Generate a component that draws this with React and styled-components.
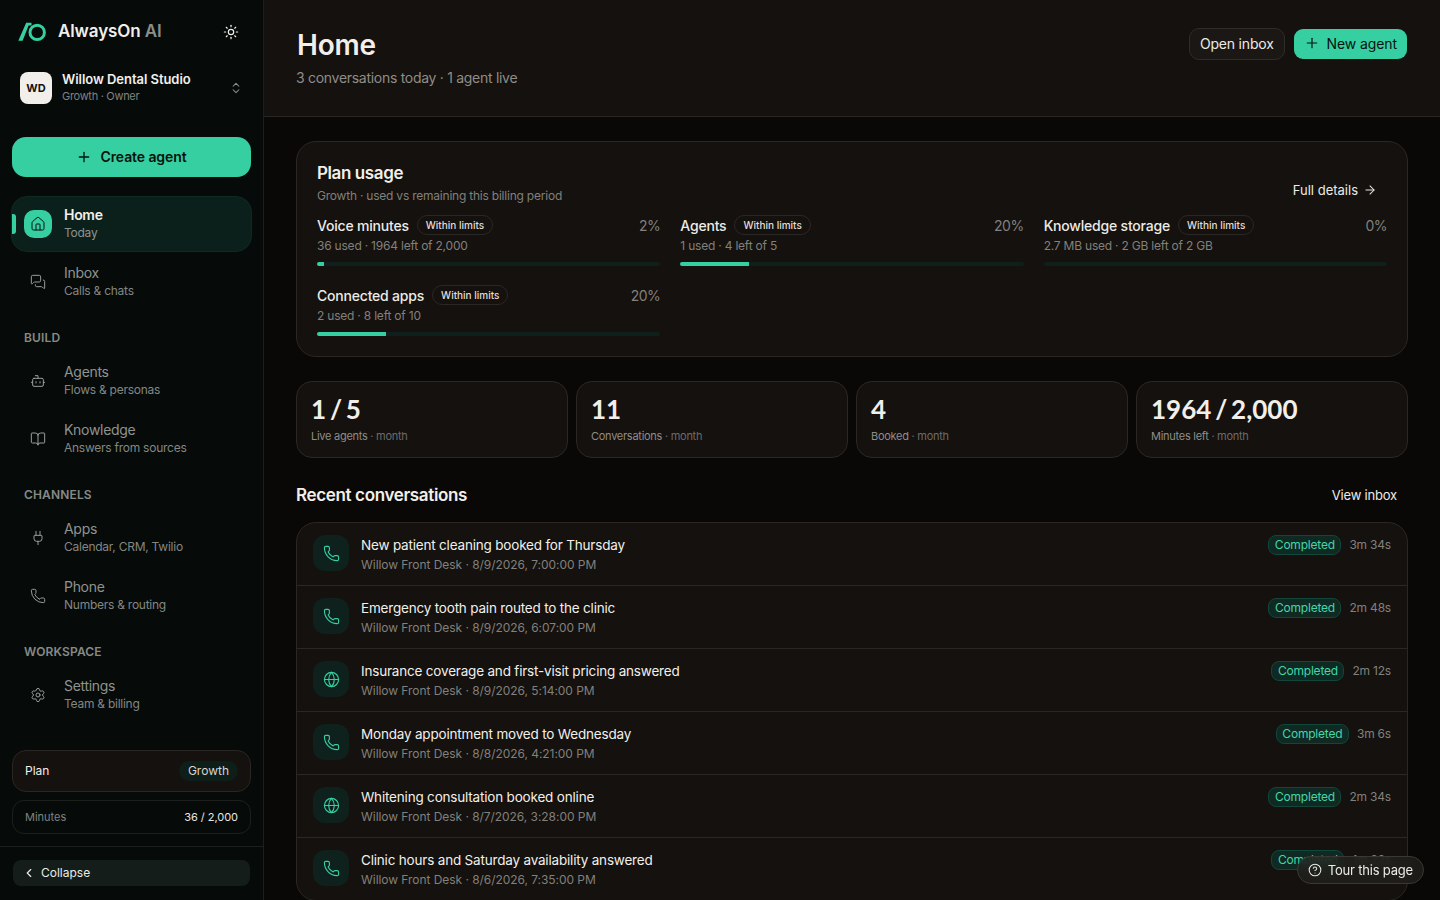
import styled, { createGlobalStyle } from "styled-components";
import {
  ArrowRight,
  BookOpen,
  Bot,
  ChevronLeft,
  ChevronsUpDown,
  CircleHelp,
  Globe,
  House,
  MessagesSquare,
  Phone,
  Plug,
  Plus,
  Settings,
  Sun,
} from "lucide-react";

const GlobalStyle = createGlobalStyle`
  * { box-sizing: border-box; }
  html, body { margin: 0; height: 100%; overflow: hidden; background: #0a0807; }
  body {
    font-family: Inter, "Liberation Sans", sans-serif;
    color: #f2efea;
    -webkit-font-smoothing: antialiased;
  }
  button { font-family: inherit; }
`;

const Shell = styled.div`
  display: flex;
  height: 900px;
  overflow: hidden;
`;

const Sidebar = styled.aside`
  width: 264px;
  flex: none;
  height: 900px;
  display: flex;
  flex-direction: column;
  background: #060a09;
  border-right: 1px solid #1c1f1d;
`;

const Brand = styled.div`
  height: 64px;
  padding: 0 24px 0 18px;
  display: flex;
  align-items: center;
  justify-content: space-between;
  color: #f2efea;
`;

const BrandName = styled.div`
  display: flex;
  align-items: center;
  gap: 12px;
  font-size: 17px;
  line-height: 20px;
  font-weight: 600;
  letter-spacing: -0.1px;

  & > span {
    padding-bottom: 2px;
  }

  span span {
    color: #8b8f8b;
  }
`;

const Workspace = styled.div`
  height: 48px;
  margin-bottom: 25px;
  padding: 0 20px;
  display: flex;
  align-items: center;
  gap: 10px;
`;

const Avatar = styled.div`
  width: 32px;
  height: 32px;
  border-radius: 8px;
  background: #f2efea;
  color: #14110e;
  font-size: 11px;
  font-weight: 700;
  display: flex;
  align-items: center;
  justify-content: center;
`;

const WorkspaceText = styled.div`
  flex: 1;
  padding-bottom: 2px;
`;

const WorkspaceName = styled.div`
  font-size: 13px;
  line-height: 16px;
  font-weight: 600;
  letter-spacing: -0.05px;
`;

const WorkspaceMeta = styled.div`
  margin-top: 1px;
  font-size: 11px;
  line-height: 16px;
  letter-spacing: -0.3px;
  color: #7f8380;
`;

const CreateButton = styled.button`
  margin: 0 12px 19px;
  height: 40px;
  padding: 0 0 1px;
  border: none;
  border-radius: 14px;
  background: #36cfa2;
  color: #06140f;
  font-size: 14px;
  font-weight: 600;
  letter-spacing: -0.1px;
  display: flex;
  align-items: center;
  justify-content: center;
  gap: 8px;
`;

const Nav = styled.nav`
  padding: 0 12px;
  display: flex;
  flex-direction: column;
`;

const NavItem = styled.div`
  position: relative;
  height: 56px;
  margin-bottom: 2px;
  border-radius: 16px;
  display: flex;
  align-items: center;
  gap: 12px;
  background: ${(p) => (p.$active ? "#0b201b" : "transparent")};
  border: 1px solid ${(p) => (p.$active ? "#0f2a23" : "transparent")};
  margin-left: ${(p) => (p.$active ? "-1px" : "0")};
  margin-right: ${(p) => (p.$active ? "-1px" : "0")};
  padding: 0 11px 0 ${(p) => (p.$active ? "12px" : "11px")};
`;

const ActiveMark = styled.span`
  position: absolute;
  left: 0;
  top: 17px;
  width: 4px;
  height: 20px;
  border-radius: 0 3px 3px 0;
  background: #36cfa2;
`;

const NavIcon = styled.span`
  width: 28px;
  height: 28px;
  flex: none;
  border-radius: 10px;
  display: flex;
  align-items: center;
  justify-content: center;
  background: ${(p) => (p.$active ? "#36cfa2" : "transparent")};
  color: ${(p) => (p.$active ? "#06140f" : "#9a9e9a")};
`;

const NavLabel = styled.div`
  font-size: 14px;
  line-height: 18px;
  letter-spacing: -0.3px;
  font-weight: ${(p) => (p.$active ? 600 : 400)};
  color: ${(p) => (p.$active ? "#f2efea" : "#8f938f")};
`;

const NavSub = styled.div`
  font-size: 12px;
  line-height: 18px;
  letter-spacing: -0.25px;
  color: ${(p) => (p.$active ? "#8f938f" : "#838783")};
`;

const NavGroup = styled.div`
  font-size: 12px;
  line-height: 16px;
  font-weight: 600;
  letter-spacing: 0.15px;
  color: #868a86;
  padding: 0 12px;
  margin: 18px 0 7px;
`;

const SideFoot = styled.div`
  margin-top: auto;
  display: flex;
  flex-direction: column;
`;

const PlanRow = styled.div`
  margin: 0 12px 8px;
  height: 42px;
  padding: 0 12px 1px;
  border: 1px solid #2a2623;
  border-radius: 14px;
  background: #14110e;
  display: flex;
  align-items: center;
  justify-content: space-between;
  font-size: 12px;
`;

const PlanTag = styled.span`
  padding: 3px 9px;
  line-height: 14px;
  border-radius: 10px;
  background: #0e1e19;
  color: #d8d6d1;
`;

const MinutesRow = styled.div`
  margin: 0 12px 12px;
  height: 34px;
  padding: 0 12px;
  border: 1px solid #1e201e;
  border-radius: 12px;
  display: flex;
  align-items: center;
  justify-content: space-between;
  font-size: 11px;
  color: #7f8380;

  b {
    font-weight: 400;
    letter-spacing: -0.05px;
    color: #e8e6e1;
  }
`;

const CollapseWrap = styled.div`
  border-top: 1px solid #1c1f1d;
  padding: 13px 13px 14px;
`;

const CollapseButton = styled.button`
  width: 100%;
  height: 26px;
  padding: 0 8px 1px;
  border: none;
  border-radius: 8px;
  background: #141d1a;
  color: #ecebe6;
  font-size: 12px;
  display: flex;
  align-items: center;
  gap: 5px;

  svg {
    margin-left: 1px;
  }
`;

const Main = styled.main`
  flex: 1;
  min-width: 0;
  height: 900px;
  overflow: hidden;
  background: #0a0807;
`;

const PageHeader = styled.header`
  height: 117px;
  padding: 28px 33px 0 32px;
  background: #14110e;
  border-bottom: 1px solid #2a2724;
  display: flex;
  justify-content: space-between;
  align-items: flex-start;
`;

const PageTitle = styled.h1`
  margin: 0 0 0 1px;
  font-size: 28px;
  line-height: 34px;
  font-weight: 600;
  letter-spacing: -0.2px;
`;

const PageSub = styled.p`
  margin: 6px 0 0;
  font-size: 14px;
  line-height: 20px;
  letter-spacing: -0.29px;
  color: #8f8d89;
`;

const HeaderActions = styled.div`
  display: flex;
  align-items: center;
  gap: 9px;
`;

const GhostButton = styled.button`
  height: 32px;
  padding: 0 10px 2px;
  border: 1px solid #2f2c29;
  border-radius: 10px;
  background: #1a1714;
  color: #ecebe6;
  font-size: 14px;
  letter-spacing: -0.2px;
`;

const PrimaryButton = styled.button`
  height: 30px;
  padding: 0 10px 2px;
  border: none;
  border-radius: 9px;
  background: #36cfa2;
  color: #06140f;
  font-size: 14px;
  letter-spacing: -0.1px;
  display: flex;
  align-items: center;
  gap: 7px;
`;

const Content = styled.div`
  padding: 24px 32px 0;
`;

const UsageCard = styled.section`
  position: relative;
  height: 216px;
  padding: 19px 20px;
  border: 1px solid #2a2724;
  border-radius: 20px;
  background: #14110e;
`;

const CardTitle = styled.h2`
  margin: 0;
  font-size: 17px;
  line-height: 24px;
  font-weight: 600;
  letter-spacing: -0.4px;
`;

const CardSub = styled.p`
  margin: 2px 0 0;
  font-size: 12px;
  line-height: 18px;
  letter-spacing: -0.22px;
  color: #82807c;
`;

const DetailsLink = styled.a`
  position: absolute;
  right: 30px;
  top: 39px;
  display: flex;
  align-items: center;
  gap: 5px;
  font-size: 13px;
  line-height: 18px;
  color: #ecebe6;
`;

const MeterGrid = styled.div`
  margin-top: 10px;
  display: grid;
  grid-template-columns: repeat(3, 1fr);
  column-gap: 20px;
  row-gap: 19px;
`;

const MeterHead = styled.div`
  display: flex;
  align-items: center;
  gap: 8px;
  height: 20px;
`;

const MeterName = styled.span`
  font-size: 14px;
  letter-spacing: -0.2px;
  color: #ecebe6;
  font-weight: 500;
`;

const LimitTag = styled.span`
  height: 20px;
  padding: 1px 8px 0;
  border: 1px solid #2a2724;
  border-radius: 10px;
  font-size: 10px;
  font-weight: 500;
  line-height: 17px;
  color: #e0ded9;
`;

const MeterPct = styled.span`
  margin-left: auto;
  font-size: 14px;
  letter-spacing: -0.5px;
  color: #82807c;
`;

const MeterDetail = styled.div`
  margin-top: 2px;
  font-size: 12px;
  line-height: 18px;
  letter-spacing: -0.21px;
  color: #82807c;
`;

const Track = styled.div`
  margin-top: 7px;
  height: 4px;
  border-radius: 2px;
  background: #0f1f1b;
  overflow: hidden;
`;

const Fill = styled.div`
  height: 100%;
  background: #36cfa2;
`;

const StatGrid = styled.div`
  margin-top: 24px;
  display: grid;
  grid-template-columns: repeat(4, 1fr);
  gap: 8px;
`;

const StatCard = styled.div`
  height: 77px;
  padding: 11px 14px;
  border: 1px solid #2a2724;
  border-radius: 16px;
  background: #14110e;
`;

const StatValue = styled.div`
  font-family: Lato, Inter, sans-serif;
  font-size: 26px;
  line-height: 32px;
  font-weight: 700;
  word-spacing: -2.5px;
`;

const StatLabel = styled.div`
  margin-top: 3px;
  font-size: 11px;
  line-height: 16px;
  letter-spacing: -0.27px;
  color: #8f8d89;

  span {
    color: #6d6b68;
  }
`;

const SectionHead = styled.div`
  margin-top: 25px;
  height: 24px;
  display: flex;
  align-items: center;
  justify-content: space-between;
`;

const SectionTitle = styled.h2`
  margin: 0;
  font-size: 17px;
  font-weight: 600;
  letter-spacing: -0.35px;
`;

const SectionLink = styled.a`
  padding-right: 11px;
  font-size: 13px;
  letter-spacing: -0.2px;
  color: #ecebe6;
`;

const ConvoList = styled.div`
  margin-top: 15px;
  border: 1px solid #2a2724;
  border-radius: 20px;
  background: #14110e;
`;

const ConvoRow = styled.div`
  height: ${(p) => (p.$first ? "62px" : "63px")};
  padding: 12px 16px 0;
  display: flex;
  align-items: flex-start;
  gap: 12px;
  border-top: ${(p) => (p.$first ? "none" : "1px solid #2a2724")};
`;

const ConvoIcon = styled.span`
  width: 36px;
  height: 36px;
  flex: none;
  border-radius: 12px;
  background: #0f211c;
  color: #36cfa2;
  display: flex;
  align-items: center;
  justify-content: center;
`;

const ConvoBody = styled.div`
  flex: 1;
  min-width: 0;
`;

const ConvoTitle = styled.div`
  font-size: 13.5px;
  line-height: 20px;
  letter-spacing: -0.19px;
  color: #f2efea;
`;

const ConvoMeta = styled.div`
  margin-top: 1px;
  font-size: 12px;
  line-height: 18px;
  letter-spacing: -0.05px;
  color: #82807c;
`;

const ConvoSide = styled.div`
  display: flex;
  align-items: center;
  gap: 8px;
  height: 20px;
`;

const StatusTag = styled.span`
  height: 20px;
  padding: 0 5.5px;
  border: 1px solid #11463a;
  border-radius: 8px;
  background: #0e2a23;
  color: #45d6aa;
  font-size: 12px;
  line-height: 18px;
  letter-spacing: -0.2px;
`;

const Duration = styled.span`
  padding-bottom: 2px;
  font-size: 12px;
  letter-spacing: -0.2px;
  color: #82807c;
`;

const TourButton = styled.button`
  position: fixed;
  right: 16px;
  bottom: 16px;
  height: 28px;
  padding: 0 10px;
  border: 1px solid #3a3835;
  border-radius: 14px;
  background: rgba(34, 32, 29, 0.8);
  backdrop-filter: blur(6px);
  color: #ecebe6;
  font-size: 13px;
  letter-spacing: -0.2px;
  display: flex;
  align-items: center;
  gap: 6px;
  z-index: 5;
`;

const LogoMark = () => (
  <svg width="28" height="20" viewBox="0 0 28 20" fill="none">
    <path d="M0.3 18.8 L8.2 0.8 H13.5 V3.6 H10.6 L4.6 18.8 Z" fill="#36cfa2" />
    <circle cx="19.2" cy="10.4" r="7.2" stroke="#36cfa2" strokeWidth="3" />
  </svg>
);

const navSections = [
  {
    items: [
      { icon: House, label: "Home", sub: "Today", active: true },
      { icon: MessagesSquare, label: "Inbox", sub: "Calls & chats" },
    ],
  },
  {
    title: "BUILD",
    items: [
      { icon: Bot, label: "Agents", sub: "Flows & personas" },
      { icon: BookOpen, label: "Knowledge", sub: "Answers from sources" },
    ],
  },
  {
    title: "CHANNELS",
    items: [
      { icon: Plug, label: "Apps", sub: "Calendar, CRM, Twilio" },
      { icon: Phone, label: "Phone", sub: "Numbers & routing" },
    ],
  },
  {
    title: "WORKSPACE",
    items: [{ icon: Settings, label: "Settings", sub: "Team & billing" }],
  },
];

const meters = [
  { name: "Voice minutes", detail: "36 used · 1964 left of 2,000", pct: 2 },
  { name: "Agents", detail: "1 used · 4 left of 5", pct: 20 },
  { name: "Knowledge storage", detail: "2.7 MB used · 2 GB left of 2 GB", pct: 0 },
  { name: "Connected apps", detail: "2 used · 8 left of 10", pct: 20 },
];

const stats = [
  { value: "1 / 5", label: "Live agents" },
  { value: "11", label: "Conversations" },
  { value: "4", label: "Booked" },
  { value: "1964 / 2,000", label: "Minutes left" },
];

const conversations = [
  { icon: Phone, title: "New patient cleaning booked for Thursday", when: "8/9/2026, 7:00:00 PM", time: "3m 34s" },
  { icon: Phone, title: "Emergency tooth pain routed to the clinic", when: "8/9/2026, 6:07:00 PM", time: "2m 48s" },
  { icon: Globe, title: "Insurance coverage and first-visit pricing answered", when: "8/9/2026, 5:14:00 PM", time: "2m 12s" },
  { icon: Phone, title: "Monday appointment moved to Wednesday", when: "8/8/2026, 4:21:00 PM", time: "3m 6s" },
  { icon: Globe, title: "Whitening consultation booked online", when: "8/7/2026, 3:28:00 PM", time: "2m 34s" },
  { icon: Phone, title: "Clinic hours and Saturday availability answered", when: "8/6/2026, 7:35:00 PM", time: "1m 22s" },
];

export default function App() {
  return (
    <>
      <GlobalStyle />
      <Shell>
        <Sidebar>
          <Brand>
            <BrandName>
              <LogoMark />
              <span>
                AlwaysOn <span>AI</span>
              </span>
            </BrandName>
            <Sun size={16} strokeWidth={1.75} />
          </Brand>
          <Workspace>
            <Avatar>WD</Avatar>
            <WorkspaceText>
              <WorkspaceName>Willow Dental Studio</WorkspaceName>
              <WorkspaceMeta>Growth · Owner</WorkspaceMeta>
            </WorkspaceText>
            <ChevronsUpDown size={14} color="#8f938f" strokeWidth={1.75} />
          </Workspace>
          <CreateButton>
            <Plus size={16} strokeWidth={2} />
            Create agent
          </CreateButton>
          <Nav>
            {navSections.map((section) => (
              <div key={section.title || "main"}>
                {section.title && <NavGroup>{section.title}</NavGroup>}
                {section.items.map((item) => (
                  <NavItem key={item.label} $active={item.active}>
                    {item.active && <ActiveMark />}
                    <NavIcon $active={item.active}>
                      <item.icon size={16} strokeWidth={1.5} />
                    </NavIcon>
                    <div>
                      <NavLabel $active={item.active}>{item.label}</NavLabel>
                      <NavSub $active={item.active}>{item.sub}</NavSub>
                    </div>
                  </NavItem>
                ))}
              </div>
            ))}
          </Nav>
          <SideFoot>
            <PlanRow>
              Plan
              <PlanTag>Growth</PlanTag>
            </PlanRow>
            <MinutesRow>
              Minutes
              <b>36 / 2,000</b>
            </MinutesRow>
            <CollapseWrap>
              <CollapseButton>
                <ChevronLeft size={14} strokeWidth={2} />
                Collapse
              </CollapseButton>
            </CollapseWrap>
          </SideFoot>
        </Sidebar>
        <Main>
          <PageHeader>
            <div>
              <PageTitle>Home</PageTitle>
              <PageSub>3 conversations today · 1 agent live</PageSub>
            </div>
            <HeaderActions>
              <GhostButton>Open inbox</GhostButton>
              <PrimaryButton>
                <Plus size={16} strokeWidth={1.75} />
                New agent
              </PrimaryButton>
            </HeaderActions>
          </PageHeader>
          <Content>
            <UsageCard>
              <CardTitle>Plan usage</CardTitle>
              <CardSub>Growth · used vs remaining this billing period</CardSub>
              <DetailsLink>
                Full details
                <ArrowRight size={14} strokeWidth={1.75} />
              </DetailsLink>
              <MeterGrid>
                {meters.map((m) => (
                  <div key={m.name}>
                    <MeterHead>
                      <MeterName>{m.name}</MeterName>
                      <LimitTag>Within limits</LimitTag>
                      <MeterPct>{m.pct}%</MeterPct>
                    </MeterHead>
                    <MeterDetail>{m.detail}</MeterDetail>
                    <Track>
                      <Fill style={{ width: `${m.pct}%` }} />
                    </Track>
                  </div>
                ))}
              </MeterGrid>
            </UsageCard>
            <StatGrid>
              {stats.map((s) => (
                <StatCard key={s.label}>
                  <StatValue>{s.value}</StatValue>
                  <StatLabel>
                    {s.label} <span>· month</span>
                  </StatLabel>
                </StatCard>
              ))}
            </StatGrid>
            <SectionHead>
              <SectionTitle>Recent conversations</SectionTitle>
              <SectionLink>View inbox</SectionLink>
            </SectionHead>
            <ConvoList>
              {conversations.map((c, i) => (
                <ConvoRow key={c.title} $first={i === 0}>
                  <ConvoIcon>
                    <c.icon size={17} strokeWidth={1.6} />
                  </ConvoIcon>
                  <ConvoBody>
                    <ConvoTitle>{c.title}</ConvoTitle>
                    <ConvoMeta>Willow Front Desk · {c.when}</ConvoMeta>
                  </ConvoBody>
                  <ConvoSide>
                    <StatusTag>Completed</StatusTag>
                    <Duration>{c.time}</Duration>
                  </ConvoSide>
                </ConvoRow>
              ))}
            </ConvoList>
          </Content>
        </Main>
      </Shell>
      <TourButton>
        <CircleHelp size={14} strokeWidth={1.75} />
        Tour this page
      </TourButton>
    </>
  );
}
